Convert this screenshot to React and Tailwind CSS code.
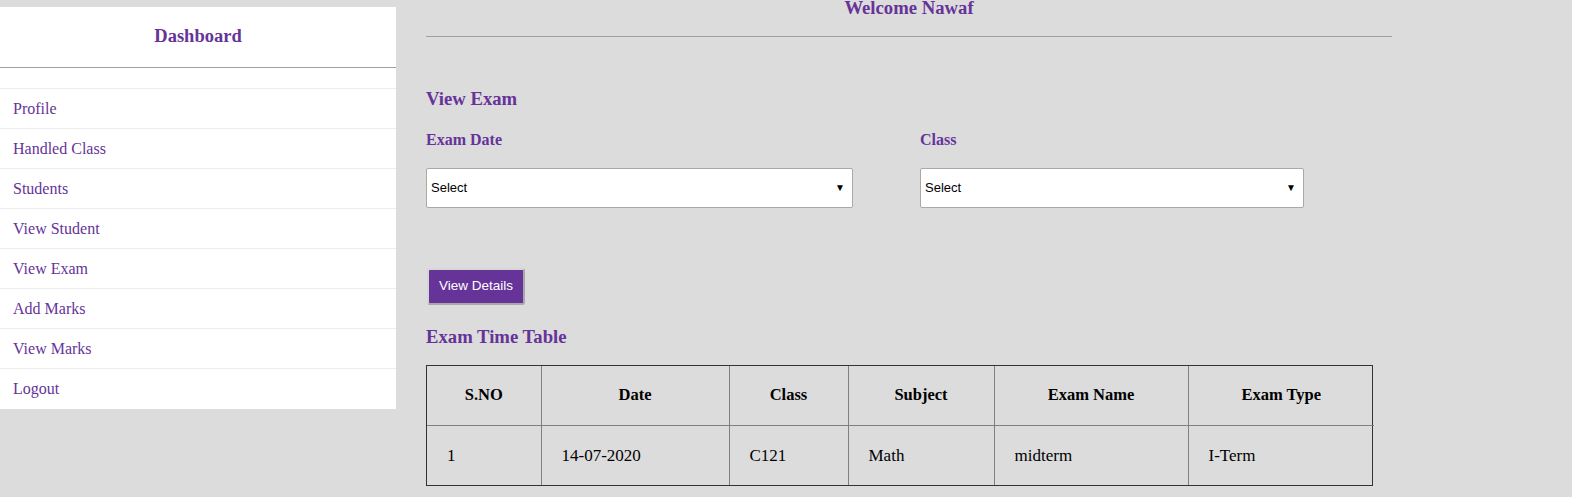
import React from "react";

const menu = [
  "Profile",
  "Handled Class",
  "Students",
  "View Student",
  "View Exam",
  "Add Marks",
  "View Marks",
  "Logout",
];

const cols = [
  { name: "S.NO", w: "w-[114px]", val: "1" },
  { name: "Date", w: "w-[188px]", val: "14-07-2020" },
  { name: "Class", w: "w-[119px]", val: "C121" },
  { name: "Subject", w: "w-[146px]", val: "Math" },
  { name: "Exam Name", w: "w-[194px]", val: "midterm" },
  { name: "Exam Type", w: "w-[186px]", val: "I-Term" },
];

function SelectBox({ width }) {
  return (
    <div
      className={`${width} h-[40px] bg-white border border-[#a9a9a9] rounded-[2px] flex items-center justify-between pl-[4px] pr-[7px] font-['Liberation_Sans',sans-serif] text-[13px] text-black`}
    >
      <span>Select</span>
      <span className="text-[10px]">▼</span>
    </div>
  );
}

export default function App() {
  return (
    <div className="min-h-[497px] bg-[#dcdcdc] flex items-start font-['Liberation_Serif',serif] text-[#663399]">
      {/* Sidebar */}
      <div className="w-[396px] mt-[7px] bg-white shrink-0">
        <div className="h-[61px] flex items-center justify-center border-b border-[#a0a0a0] font-bold text-[18.5px]">
          Dashboard
        </div>
        <div className="h-[21px] border-b border-[#ececec]"></div>
        {menu.map((m, i) => (
          <div
            key={m}
            className={`h-[40px] flex items-center pl-[13px] text-[16px] ${
              i < menu.length - 1 ? "border-b border-[#ececec]" : ""
            }`}
          >
            {m}
          </div>
        ))}
      </div>

      {/* Main */}
      <div className="ml-[30px] w-[966px]">
        <div className="h-[37px] border-b border-[#a0a0a0] flex justify-center">
          <span className="font-bold text-[18.7px] leading-none -mt-[1px]">
            Welcome Nawaf
          </span>
        </div>

        <h2 className="font-bold text-[18.7px] mt-[53px] leading-none">View Exam</h2>

        <div className="flex mt-[23px]">
          <div className="w-[494px]">
            <div className="font-bold text-[16px] leading-none">Exam Date</div>
            <div className="mt-[20px]">
              <SelectBox width="w-[427px]" />
            </div>
          </div>
          <div>
            <div className="font-bold text-[16px] leading-none">Class</div>
            <div className="mt-[20px]">
              <SelectBox width="w-[384px]" />
            </div>
          </div>
        </div>

        <button className="mt-[60px] ml-[1px] h-[37px] px-[10px] bg-[#663399] text-white text-[13.5px] font-['Liberation_Sans',sans-serif] rounded-[3px] border-2 border-t-[#d6d6d6] border-l-[#d6d6d6] border-r-[#a8a8a8] border-b-[#a8a8a8]">
          View Details
        </button>

        <h2 className="font-bold text-[18.7px] mt-[23px] leading-none">
          Exam Time Table
        </h2>

        <div className="mt-[19px] w-[947px] border border-[#333]">
          <table className="w-full table-fixed border-collapse text-black">
            <thead>
              <tr className="h-[59px]">
                {cols.map((c, i) => (
                  <th
                    key={c.name}
                    className={`${c.w} border-b border-[#808080] ${
                      i > 0 ? "border-l" : ""
                    } font-bold text-center text-[16.5px]`}
                  >
                    {c.name}
                  </th>
                ))}
              </tr>
            </thead>
            <tbody>
              <tr className="h-[60px]">
                {cols.map((c, i) => (
                  <td
                    key={c.name}
                    className={`border-[#808080] ${
                      i > 0 ? "border-l" : ""
                    } pl-[20px] text-left text-[17px]`}
                  >
                    {c.val}
                  </td>
                ))}
              </tr>
            </tbody>
          </table>
        </div>
      </div>
    </div>
  );
}
